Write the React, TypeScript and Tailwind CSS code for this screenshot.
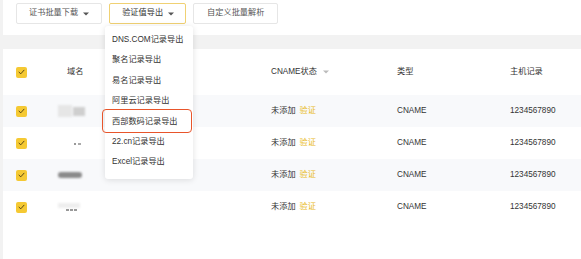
import React from "react";

const rows = [
  { striped: true, blob: "light" },
  { striped: false, blob: "dots" },
  { striped: true, blob: "dark" },
  { striped: false, blob: "faint" },
];

const exportOptions = [
  "DNS.COM记录导出",
  "聚名记录导出",
  "易名记录导出",
  "阿里云记录导出",
  "西部数码记录导出",
  "22.cn记录导出",
  "Excel记录导出",
];

function Caret({ className = "" }: { className?: string }) {
  return (
    <svg className={className} width="6" height="4" viewBox="0 0 6 4" fill="currentColor">
      <path d="M0 0.5h6L3 3.5z" />
    </svg>
  );
}

function Checkbox() {
  return (
    <div className="w-[11px] h-[11px] rounded-[2px] bg-[#f5c933] flex items-center justify-center">
      <svg width="7" height="6" viewBox="0 0 7 6" fill="none">
        <path d="M1 3.2L2.8 4.8L6 1.2" stroke="#4a3b10" strokeWidth="0.9" strokeLinecap="round" strokeLinejoin="round" />
      </svg>
    </div>
  );
}

function DomainBlob({ kind }: { kind: string }) {
  if (kind === "light") {
    return (
      <div className="flex items-center gap-[1px]">
        <div className="w-[14px] h-[12px] bg-[#e6e6e6] blur-[1px]" />
        <div className="w-[12px] h-[9px] bg-[#cfcfcf] blur-[1px]" />
      </div>
    );
  }
  if (kind === "dots") {
    return (
      <div className="flex items-center gap-[2px] pl-[16px] pt-[2px]">
        <div className="w-[2px] h-[2px] bg-[#999] blur-[0.5px]" />
        <div className="w-[3px] h-[2px] bg-[#aaa] blur-[0.5px]" />
      </div>
    );
  }
  if (kind === "dark") {
    return <div className="w-[24px] h-[6px] rounded-full bg-[#8a8a8a] blur-[1px]" />;
  }
  return (
    <div className="flex flex-col gap-[1px]">
      <div className="w-[22px] h-[5px] bg-[#eeeeee] blur-[1px]" />
      <div className="flex gap-[1px] pl-[8px]">
        <div className="w-[3px] h-[2px] bg-[#999] blur-[0.5px]" />
        <div className="w-[3px] h-[2px] bg-[#999] blur-[0.5px]" />
        <div className="w-[3px] h-[2px] bg-[#999] blur-[0.5px]" />
      </div>
    </div>
  );
}

export default function App() {
  return (
    <div
      className="relative w-[581px] h-[259px] overflow-hidden bg-[#f2f2f2] pl-[3px] flex flex-col text-[8.2px] text-[#333]"
      style={{ fontFamily: '"Liberation Sans", "Noto Sans CJK SC", sans-serif' }}
    >
      {/* toolbar */}
      <div className="h-[35px] bg-white flex items-start gap-[7px] pt-[3px] pl-[13px]">
        <button className="h-[21px] px-[12px] border border-[#e6e6e6] rounded-[2px] bg-white flex items-center gap-[5px] text-[#555]">
          <span>证书批量下载</span>
          <Caret className="text-[#555]" />
        </button>
        <button className="h-[21px] pl-[12px] pr-[11px] border border-[#f0d173] rounded-[2px] bg-white flex items-center gap-[5px] text-[#333]">
          <span>验证值导出</span>
          <Caret className="text-[#555]" />
        </button>
        <button className="h-[21px] px-[13px] border border-[#e6e6e6] rounded-[2px] bg-white flex items-center text-[#555]">
          <span>自定义批量解析</span>
        </button>
      </div>

      <div className="h-[14px]" />

      {/* table card */}
      <div className="flex-1 bg-white">
        <div className="h-[46px] grid grid-cols-[42px_213px_126px_113px_1fr] items-center pl-[13px]">
          <Checkbox />
          <span className="pl-[9px]">域名</span>
          <span className="flex items-center gap-[6px]">
            CNAME状态
            <Caret className="text-[#bbb]" />
          </span>
          <span>类型</span>
          <span>主机记录</span>
        </div>
        {rows.map((row, i) => (
          <div
            key={i}
            className={`h-[32px] grid grid-cols-[42px_213px_126px_113px_1fr] items-center pl-[13px] ${
              row.striped ? "bg-[#f8f9fb]" : "bg-white"
            }`}
          >
            <Checkbox />
            <DomainBlob kind={row.blob} />
            <span className="flex items-center gap-[4px]">
              <span>未添加</span>
              <span className="text-[#e8b923]">验证</span>
            </span>
            <span>CNAME</span>
            <span>1234567890</span>
          </div>
        ))}
      </div>

      {/* export dropdown */}
      <div className="absolute left-[105px] top-[26px] w-[88px] bg-white rounded-[3px] shadow-[0_1px_6px_rgba(0,0,0,0.12)] pt-[4px] pb-[6px]">
        {exportOptions.map((opt) => (
          <div key={opt} className="h-[20.4px] flex items-center pl-[7px] text-[#333]">
            {opt}
          </div>
        ))}
      </div>

      {/* highlight annotation */}
      <div className="absolute left-[102px] top-[109px] w-[90px] h-[24px] border-[1.5px] border-[#e8552b] rounded-[4px]" />
    </div>
  );
}
